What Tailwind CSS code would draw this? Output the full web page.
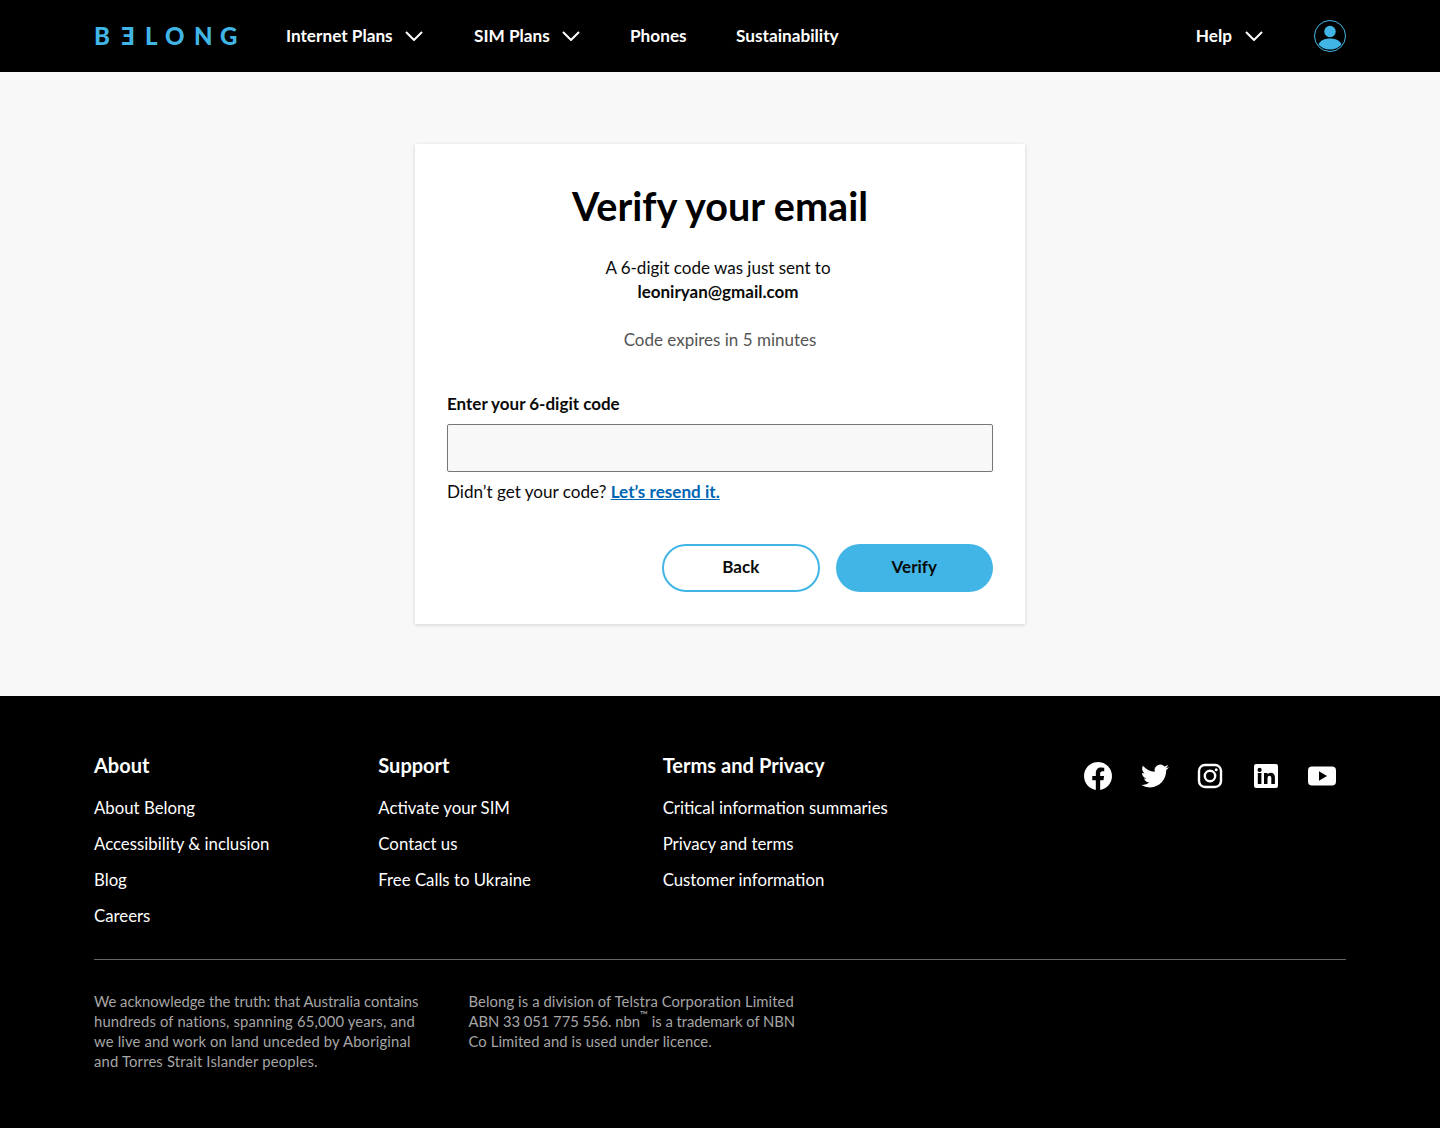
<!DOCTYPE html>
<html lang="en">
<head>
<meta charset="utf-8">
<title>Verify your email</title>
<script src="https://cdn.jsdelivr.net/npm/@tailwindcss/browser@4"></script>
</head>
<body class="font-['Lato','Liberation_Sans',sans-serif] bg-[#f8f8f8] text-[#0a0a0a]">
<header class="h-[72px] bg-black text-white flex items-center pl-[94px] pr-[94px]">
  <a class="w-[192px] shrink-0 text-[#41b6e6] text-[24px] font-black leading-none flex">
    <span class="w-[26px]">B</span><span class="w-[15px] mr-[10px] -scale-x-100">E</span><span class="w-[20px]">L</span><span class="w-[29px]">O</span><span class="w-[26px]">N</span><span>G</span>
  </a>
  <nav class="flex items-center text-[17.2px] font-bold h-full">
    <a class="flex items-center w-[188px]"><span>Internet Plans</span><svg class="ml-[12px] w-[18px] h-[10px]" viewBox="0 0 18 10" fill="none" stroke="currentColor" stroke-width="2"><path d="M1 1l8 8 8-8"/></svg></a>
    <a class="flex items-center w-[156px]"><span>SIM Plans</span><svg class="ml-[12px] w-[18px] h-[10px]" viewBox="0 0 18 10" fill="none" stroke="currentColor" stroke-width="2"><path d="M1 1l8 8 8-8"/></svg></a>
    <a class="w-[106px]">Phones</a>
    <a>Sustainability</a>
  </nav>
  <div class="ml-auto flex items-center text-[17.2px] font-bold">
    <a class="flex items-center"><span>Help</span><svg class="ml-[13px] w-[18px] h-[10px]" viewBox="0 0 18 10" fill="none" stroke="currentColor" stroke-width="2"><path d="M1 1l8 8 8-8"/></svg></a>
    <svg class="ml-[51px] w-[32px] h-[32px]" viewBox="0 0 32 32"><circle cx="16" cy="16" r="15.5" fill="none" stroke="#41b6e6"/><circle cx="16" cy="11.5" r="5.7" fill="#41b6e6"/><path d="M4.5 24.5c1.5-4 6-6 11.500-6s10 2 11.500 6c-2.600 3-6.800 5-11.500 5s-8.900-2-11.500-5z" fill="#41b6e6"/></svg>
  </div>
</header>

<main class="h-[624px] flex justify-center pt-[72px]">
  <section class="w-[610px] h-[480px] bg-white shadow-[0_1px_4px_rgba(0,0,0,0.15)] px-[32px] pt-[38px]">
    <h1 class="text-[39.6px] leading-[48px] font-bold text-center text-black">Verify your email</h1>
    <p class="mt-[26px] text-[17px] leading-[24px] text-center pr-[4px]">A 6-digit code was just sent to<br><strong class="font-bold">leoniryan@gmail.com</strong></p>
    <p class="mt-[24px] text-[17px] leading-[24px] text-center text-[#555]">Code expires in 5 minutes</p>
    <label class="block mt-[40px] text-[17px] leading-[24px] font-bold">Enter your 6-digit code</label>
    <input class="block mt-[8px] w-full h-[48px] bg-[#f8f8f8] border border-[#777] rounded-[2px]" type="text">
    <p class="mt-[8px] text-[17.1px] leading-[24px]">Didn’t get your code? <a class="text-[#0066b3] font-bold underline">Let’s resend it.</a></p>
    <div class="mt-[40px] flex justify-end gap-[16px]">
      <button class="w-[157.5px] h-[48px] pb-[2px] rounded-full border-2 border-[#41b6e6] bg-white font-bold text-[17px]">Back</button>
      <button class="w-[157.5px] h-[48px] pb-[2px] rounded-full bg-[#41b6e6] font-bold text-[17px]">Verify</button>
    </div>
  </section>
</main>

<footer class="h-[432px] bg-black text-white px-[94px] pt-[56px]">
  <div class="flex h-[208px] border-b border-[#666]">
    <div class="w-[284.33px]">
      <h2 class="text-[20px] leading-[26px] font-bold">About</h2>
      <ul class="mt-[12px] text-[16.8px] leading-[36px]"><li>About Belong</li><li>Accessibility &amp; inclusion</li><li>Blog</li><li>Careers</li></ul>
    </div>
    <div class="w-[284.33px]">
      <h2 class="text-[20px] leading-[26px] font-bold">Support</h2>
      <ul class="mt-[12px] text-[16.8px] leading-[36px]"><li>Activate your SIM</li><li>Contact us</li><li>Free Calls to Ukraine</li></ul>
    </div>
    <div class="w-[284.33px]">
      <h2 class="text-[20.1px] leading-[26px] font-bold">Terms and Privacy</h2>
      <ul class="mt-[12px] text-[16.8px] leading-[36px]"><li>Critical information summaries</li><li>Privacy and terms</li><li>Customer information</li></ul>
    </div>
    <div class="ml-auto mr-[10px] flex gap-[28px] pt-[10px] h-fit">
      <svg class="w-[28px] h-[28px]" viewBox="0 0 24 24" fill="#fff"><path d="M24 12.070C24 5.400 18.630 0 12 0S0 5.400 0 12.070c0 6.030 4.390 11.020 10.130 11.930v-8.440H7.080v-3.490h3.050V9.410c0-3.020 1.790-4.700 4.530-4.700 1.310 0 2.680.24 2.680.24v2.970h-1.510c-1.490 0-1.960.93-1.960 1.890v2.260h3.330l-.53 3.490h-2.800V24C19.610 23.090 24 18.100 24 12.070z"/></svg>
      <svg class="w-[28px] h-[28px] translate-x-[1px]" viewBox="0 0 24 24" fill="#fff"><path d="M23.950 4.570a10 10 0 0 1-2.820.77 4.960 4.960 0 0 0 2.160-2.720c-.95.550-2 .96-3.130 1.190a4.920 4.920 0 0 0-8.380 4.480C7.690 8.100 4.070 6.130 1.640 3.160a4.820 4.820 0 0 0-.67 2.480c0 1.710.87 3.210 2.190 4.100a4.900 4.900 0 0 1-2.230-.62v.06a4.920 4.920 0 0 0 3.950 4.830 4.990 4.990 0 0 1-2.210.08 4.940 4.940 0 0 0 4.610 3.420A9.870 9.870 0 0 1 0 19.540a14 14 0 0 0 7.560 2.210c9.050 0 14-7.500 14-13.980 0-.21 0-.42-.02-.63a9.940 9.940 0 0 0 2.460-2.550z"/></svg>
      <svg class="w-[28px] h-[28px]" viewBox="0 0 28 28" fill="none" stroke="#fff" stroke-width="2.400"><rect x="3" y="3" width="22" height="22" rx="6"/><circle cx="14" cy="14" r="5.200"/><circle cx="20.200" cy="7.800" r="1.500" fill="#fff" stroke="none"/></svg>
      <svg class="w-[28px] h-[28px]" viewBox="0 0 28 28"><path fill="#fff" d="M4 2h20a2 2 0 0 1 2 2v20a2 2 0 0 1-2 2H4a2 2 0 0 1-2-2V4a2 2 0 0 1 2-2zm1.800 9v11h3.600V11zm1.800-5.200a2.100 2.100 0 1 0 0 4.200 2.100 2.100 0 0 0 0-4.200zM12 11v11h3.500v-5.700c0-1.600.7-2.500 2-2.500s1.800.9 1.800 2.500V22h3.600v-6.500c0-3-1.500-4.800-4.100-4.800-1.500 0-2.600.7-3.300 1.800V11z"/></svg>
      <svg class="w-[28px] h-[28px]" viewBox="0 0 28 28"><path fill="#fff" d="M4 4.500h20a4 4 0 0 1 4 4v11a4 4 0 0 1-4 4H4a4 4 0 0 1-4-4v-11a4 4 0 0 1 4-4zm7 4.800v9.400l8-4.700z"/></svg>
    </div>
  </div>
  <div class="flex mt-[31px] text-[14.8px] leading-[20px] text-[#a6a6a6]">
    <p class="w-[374.500px]">We acknowledge the truth: that Australia contains<br><span class="tracking-[0.17px]">hundreds of nations, spanning 65,000 years, and<br>we live and work on land unceded by Aboriginal<br>and Torres Strait Islander peoples.</span></p>
    <p class="tracking-[0.1px]">Belong is a division of Telstra Corporation Limited<br><span class="tracking-[-0.05px]">ABN 33 051 775 556. nbn<sup class="text-[11px] align-[3px] leading-none">™</sup> is a trademark of NBN</span><br>Co Limited and is used under licence.</p>
  </div>
</footer>
</body>
</html>
